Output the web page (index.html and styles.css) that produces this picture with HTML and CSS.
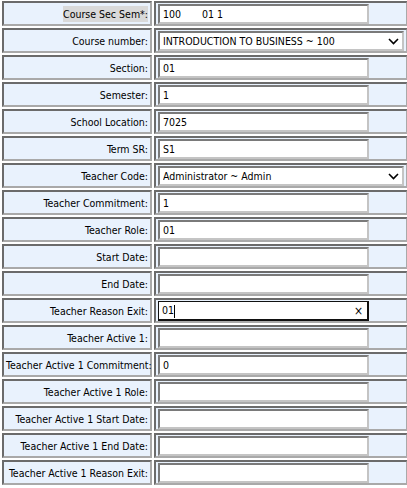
FILE: index.html
```html
<!DOCTYPE html>
<html>
<head>
<meta charset="utf-8">
<link rel="stylesheet" href="styles.css">
</head>
<body>
<table class="form">
  <colgroup><col class="c1"><col class="c2"></colgroup>
  <tr><td class="lbl"><span class="hl">Course Sec Sem*:</span></td><td class="val"><input class="txt" value="100       01 1"></td></tr>
  <tr><td class="lbl">Course number:</td><td class="val"><div class="selwrap"><select class="sel"><option>INTRODUCTION TO BUSINESS ~ 100</option></select><svg class="chev" width="11" height="7" viewBox="0 0 11 7"><path d="M1 1 L5.5 5.5 L10 1" fill="none" stroke="#000" stroke-width="1.6"/></svg></div></td></tr>
  <tr><td class="lbl">Section:</td><td class="val"><input class="txt" value="01"></td></tr>
  <tr><td class="lbl">Semester:</td><td class="val"><input class="txt" value="1"></td></tr>
  <tr><td class="lbl">School Location:</td><td class="val"><input class="txt" value="7025"></td></tr>
  <tr><td class="lbl">Term SR:</td><td class="val"><input class="txt" value="S1"></td></tr>
  <tr><td class="lbl">Teacher Code:</td><td class="val"><div class="selwrap"><select class="sel"><option>Administrator ~ Admin</option></select><svg class="chev" width="11" height="7" viewBox="0 0 11 7"><path d="M1 1 L5.5 5.5 L10 1" fill="none" stroke="#000" stroke-width="1.6"/></svg></div></td></tr>
  <tr><td class="lbl">Teacher Commitment:</td><td class="val"><input class="txt" value="1"></td></tr>
  <tr><td class="lbl">Teacher Role:</td><td class="val"><input class="txt" value="01"></td></tr>
  <tr><td class="lbl">Start Date:</td><td class="val"><input class="txt" value=""></td></tr>
  <tr><td class="lbl">End Date:</td><td class="val"><input class="txt" value=""></td></tr>
  <tr><td class="lbl">Teacher Reason Exit:</td><td class="val"><div class="focwrap"><input class="txt focus" value="01"><span class="caret"></span><span class="clear">×</span></div></td></tr>
  <tr><td class="lbl">Teacher Active 1:</td><td class="val"><input class="txt" value=""></td></tr>
  <tr><td class="lbl">Teacher Active 1 Commitment:</td><td class="val"><input class="txt" value="0"></td></tr>
  <tr><td class="lbl">Teacher Active 1 Role:</td><td class="val"><input class="txt" value=""></td></tr>
  <tr><td class="lbl">Teacher Active 1 Start Date:</td><td class="val"><input class="txt" value=""></td></tr>
  <tr><td class="lbl">Teacher Active 1 End Date:</td><td class="val"><input class="txt" value=""></td></tr>
  <tr><td class="lbl">Teacher Active 1 Reason Exit:</td><td class="val"><input class="txt" value=""></td></tr>
</table>
</body>
</html>
```
FILE: styles.css
```css
html, body {
  margin: 0;
  padding: 0;
  background: #fff;
  overflow: hidden;
}
body {
  font-family: "DejaVu Sans Condensed", "DejaVu Sans", sans-serif;
  font-size: 10.5px;
  color: #000;
}
.form {
  border-collapse: separate;
  border-spacing: 2px;
  margin-top: -1px;
  table-layout: fixed;
  width: 410px;
}
.c1 { width: 150px; }
.c2 { width: 254px; }
.form td {
  height: 21px;
  padding: 0 2px;
  background: #e9f2fd;
  border-style: solid;
  border-width: 2px;
  border-color: #6b6b6b #a9a9a9 #a9a9a9 #6b6b6b;
}
.lbl {
  text-align: right;
  white-space: nowrap;
}
.hl {
  background: #d9d9d9;
  padding: 2px 0;
}
.txt {
  box-sizing: border-box;
  width: 211px;
  height: 20px;
  margin: 0;
  padding: 0 3px;
  font: inherit;
  display: block;
  background: #fff;
  border-style: solid;
  border-width: 2px;
  border-color: #7a7a7a #c4c4c4 #c4c4c4 #7a7a7a;
  outline: none;
}
.txt.focus {
  border-color: #111;
  border-width: 1px 2px 2px 1px;
}
.selwrap, .focwrap {
  position: relative;
  width: max-content;
}
.sel {
  box-sizing: border-box;
  width: 246px;
  height: 20px;
  margin: 0;
  padding: 0 3px;
  font: inherit;
  display: block;
  appearance: none;
  -webkit-appearance: none;
  background: #fff;
  color: #000;
  border-style: solid;
  border-width: 2px;
  border-color: #7a7a7a #c4c4c4 #c4c4c4 #7a7a7a;
  border-radius: 0;
}
.chev {
  position: absolute;
  right: 5px;
  top: 7px;
}
.caret {
  position: absolute;
  left: 16px;
  top: 4px;
  width: 1px;
  height: 13px;
  background: #000;
}
.clear {
  position: absolute;
  right: 6px;
  top: 2px;
  font-size: 12px;
  line-height: 16px;
}
```
